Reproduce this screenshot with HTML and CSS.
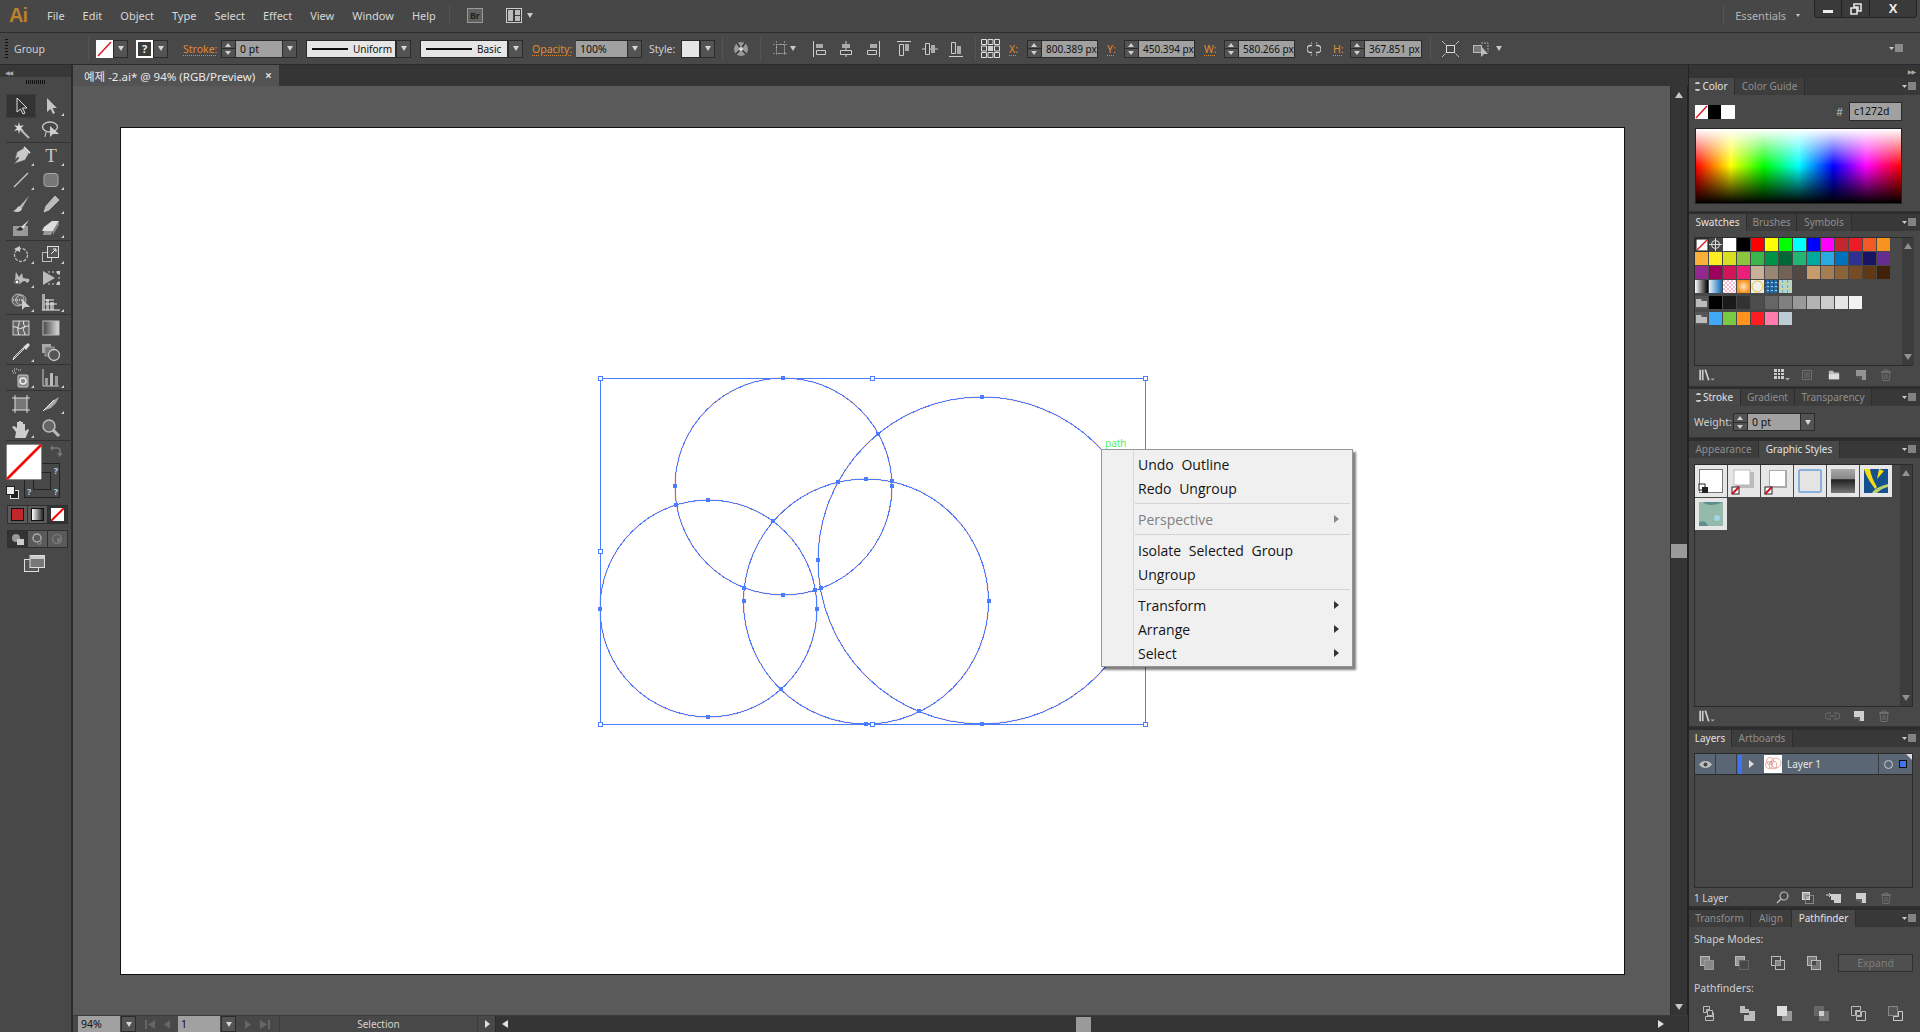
FILE: index.html
```html
<!DOCTYPE html>
<html lang="en">
<head>
    <meta charset="UTF-8">
    <title>Adobe Illustrator</title>
    <link rel="stylesheet" href="styles.css">
</head>
<body>
    <!-- icon set -->
    <svg class="defs" width="0" height="0">
        <symbol id="sel" viewBox="0 0 20 20"><path d="M6 2v14l3.5-3 2.5 5 2-1-2.5-5H16z" fill="#333" stroke="#ddd"/></symbol>
        <symbol id="direct" viewBox="0 0 20 20"><path d="M6 2v14l3.5-3 2.5 5 2-1-2.5-5H16z" fill="#c4c4c4"/></symbol>
        <symbol id="wand" viewBox="0 0 20 20"><path d="M8 2l1 4 4-1-3 3 3 3-4-1-1 4-1-4-4 1 3-3-3-3 4 1z" fill="#ddd"/><path d="M10 10l8 8" stroke="#bbb" stroke-width="2"/></symbol>
        <symbol id="lasso" viewBox="0 0 20 20"><ellipse cx="9" cy="7" rx="7.5" ry="5" fill="none" stroke="#ccc" stroke-width="1.3"/><path d="M5 12l-1 5" stroke="#ccc"/><path d="M9 6v11l3-3 6 0z" fill="#ccc"/></symbol>
        <symbol id="pen" viewBox="0 0 20 20"><path d="M13 2l5 5-4 7-9 3-2 1 5-6-1-1-3 3 2-8z" fill="#c8c8c8" stroke="#555" stroke-width=".5"/><path d="M13 1l6 6" stroke="#eee" stroke-width="1.5"/></symbol>
        <symbol id="line" viewBox="0 0 20 20"><path d="M3 17L17 3" stroke="#ccc" stroke-width="1.2"/></symbol>
        <symbol id="rrect" viewBox="0 0 20 20"><rect x="3" y="3.5" width="14" height="13" rx="3" fill="#777" stroke="#aaa"/></symbol>
        <symbol id="brush" viewBox="0 0 20 20"><path d="M18 2L9 12l2 2z" fill="#bbb"/><path d="M9 12c-3 0-3 4-7 5 4 2 9 1 9-3z" fill="#ccc"/></symbol>
        <symbol id="pencil" viewBox="0 0 20 20"><path d="M14 2l4 4-10 10-5 2 2-6z" fill="#bbb" stroke="#ddd" stroke-width=".6"/></symbol>
        <symbol id="blob" viewBox="0 0 20 20"><rect x="2" y="8" width="15" height="10" fill="#999"/><path d="M18 2l-8 7 2 2z" fill="#ddd"/><path d="M10 9c-2 0-3 2-5 3 3 1 7 1 7-1z" fill="#333"/></symbol>
        <symbol id="eraser" viewBox="0 0 20 20"><path d="M11 3h7l-6 10-9 0-2 0 2-4z" fill="#ddd"/><path d="M3 13h9l-2 4H2z" fill="#999"/><path d="M12 13l6-10v4l-6 10z" fill="#888"/></symbol>
        <symbol id="rotate" viewBox="0 0 20 20"><circle cx="10" cy="11" r="6.5" fill="none" stroke="#bbb" stroke-width="1.3" stroke-dasharray="3 1.5"/><path d="M3 5l6-3v6z" fill="#ccc"/></symbol>
        <symbol id="scale" viewBox="0 0 20 20"><rect x="1.5" y="8.5" width="9" height="9" fill="none" stroke="#bbb"/><rect x="6.5" y="2.5" width="11" height="11" fill="#555" stroke="#ddd"/><path d="M10 10l5-5M12 5h3v3" fill="none" stroke="#eee"/></symbol>
        <symbol id="warp" viewBox="0 0 20 20"><path d="M3 15c2-4 1-8 2-11l3 5 3-4 1 5 6 1c1 3-1 3-2 4-1-2-3-3-5-1-2 3-5 2-6 2z" fill="#bbb"/><circle cx="6" cy="14" r="2" fill="#fff" stroke="#444"/></symbol>
        <symbol id="free" viewBox="0 0 20 20"><path d="M2 3l12 7-12 7z" fill="#bbb"/><path d="M7 4h11v12H7" fill="none" stroke="#ccc" stroke-dasharray="2 2"/><rect x="16" y="3" width="3" height="3" fill="#ccc"/><rect x="16" y="14" width="3" height="3" fill="#ccc"/></symbol>
        <symbol id="builder" viewBox="0 0 20 20"><circle cx="7" cy="8" r="6" fill="#666" stroke="#bbb"/><circle cx="10" cy="8" r="5" fill="none" stroke="#bbb"/><path d="M2 8h9" stroke="#fff" stroke-dasharray="1 1"/><path d="M11 7v11l3-3h5z" fill="#ccc"/></symbol>
        <symbol id="graph2" viewBox="0 0 20 20"><path d="M1 2h3v16H1zM5 7h3v11H5zM9 10h4v8H9z" fill="#aaa"/><path d="M1 18h18M4 8h9M4 12h12" stroke="#eee"/></symbol>
        <symbol id="mesh" viewBox="0 0 20 20"><rect x="2" y="3" width="16" height="14" fill="#666" stroke="#ccc"/><path d="M2 9c5-1 5 3 9 1s4-2 7-2M8 3c1 4-3 6 0 14M13 3c-2 3 2 5 0 7s1 4 1 7" fill="none" stroke="#eee"/></symbol>
        <symbol id="grad" viewBox="0 0 20 20"><defs><linearGradient id="gr1"><stop offset="0" stop-color="#444"/><stop offset="1" stop-color="#ddd"/></linearGradient></defs><rect x="2" y="3" width="16" height="14" fill="url(#gr1)" stroke="#bbb"/></symbol>
        <symbol id="dropper" viewBox="0 0 20 20"><path d="M13 7l-9 9-2 2 1-3 9-9z" fill="#666" stroke="#ddd"/><path d="M12 5l5-4 2 2-4 5z" fill="#ddd"/></symbol>
        <symbol id="blend" viewBox="0 0 20 20"><rect x="1" y="2" width="9" height="9" fill="#aaa"/><rect x="4" y="5" width="9" height="9" fill="#777" stroke="#999"/><circle cx="13" cy="13" r="5.5" fill="#555" stroke="#ccc" stroke-width="1.3"/></symbol>
        <symbol id="spray" viewBox="0 0 20 20"><rect x="7" y="7" width="10" height="12" rx="1" fill="#888" stroke="#ccc"/><circle cx="12" cy="13" r="3" fill="none" stroke="#eee" stroke-width="1.5"/><path d="M1 3h4M2 5h3M3 1h3M7 2h3" stroke="#ddd" stroke-dasharray="1 1"/></symbol>
        <symbol id="bars" viewBox="0 0 20 20"><path d="M2 1v17h16" fill="none" stroke="#ccc"/><rect x="4" y="10" width="3" height="8" fill="#999"/><rect x="9" y="5" width="3" height="13" fill="#bbb"/><rect x="14" y="8" width="3" height="10" fill="#999"/></symbol>
        <symbol id="artboard" viewBox="0 0 20 20"><rect x="4" y="4" width="12" height="12" fill="#777"/><path d="M4 1v18M16 1v18M1 4h18M1 16h18" stroke="#ddd"/></symbol>
        <symbol id="slice" viewBox="0 0 20 20"><path d="M2 17L13 6l5-3-3 6-5 5z" fill="#aaa"/><path d="M2 17l11-11" stroke="#eee"/></symbol>
        <symbol id="hand" viewBox="0 0 20 20"><path d="M5 14L1 9l2-1 3 2V4h2v5-6h2v6-5h2v5-3h2v7l3-2 1 1-3 7c-1 2-3 3-5 3s-5-1-6-2z" fill="#ccc"/></symbol>
        <symbol id="zoom" viewBox="0 0 20 20"><circle cx="8" cy="8" r="6" fill="#666" stroke="#bbb" stroke-width="1.5"/><path d="M12 12l6 6" stroke="#bbb" stroke-width="3"/></symbol>
        <symbol id="lib" viewBox="0 0 20 14"><path d="M1 1h2v12H1zM4 1h2v12H4z" fill="#ccc"/><path d="M7 1l2-.5 4 12.5-2 .5z" fill="#ccc"/><path d="M14 11h5l-2.5 2.5z" fill="#aaa"/></symbol>
        <symbol id="trash" viewBox="0 0 12 12"><path d="M1 2.5h10M4 2.5V1h4v1.5M2 3.5l1 8h6l1-8zM5 5v5M7 5v5" fill="none" stroke="#6e6e6e"/></symbol>
        <symbol id="newitem" viewBox="0 0 12 12"><path d="M1 1h10v10H7V7H1z" fill="#cfcfcf"/><path d="M1 8h5v3.5" fill="none" stroke="#777"/></symbol>
        <symbol id="flyout" viewBox="0 0 14 9"><path d="M0 3h5L2.5 6z" fill="#ccc"/><path d="M6 1h8M6 3h8M6 5h8M6 7h8" stroke="#ccc"/></symbol>
        <symbol id="folder" viewBox="0 0 14 12"><path d="M1 1h5l1 2h6v8H1z" fill="#bbb"/><path d="M1 5h12v6H1z" fill="#ddd"/></symbol>
    </svg>

    <div class="menubar">
        <span class="app-logo">Ai</span>
        <nav class="menu-items">
            <span>File</span><span>Edit</span><span>Object</span><span>Type</span><span>Select</span><span>Effect</span><span>View</span><span>Window</span><span>Help</span>
        </nav>
        <span class="vsep tall ml-13"></span>
        <span class="bridge ml-17">Br</span>
        <svg class="ml-23" width="16" height="15" viewBox="0 0 16 15"><rect x=".5" y=".5" width="15" height="14" fill="#3c3c3c" stroke="#ccc"/><path d="M2 2h5v11H2zM9 2h5v5H9zM9 8h5v5H9z" fill="#bbb"/></svg>
        <span class="caret light ml-5"></span>
        <span class="vsep tall workspace-sep"></span>
        <span class="workspace">Essentials</span>
        <span class="caret small ml-10"></span>
        <div class="win-btns">
            <span class="win-btn min"><i></i></span>
            <span class="win-btn restore"><svg width="12" height="12" viewBox="0 0 12 12"><path d="M4 1h7v7H8V4H4zM1 5h6v6H1z" fill="none" stroke="#e6e6e6" stroke-width="1.6"/></svg></span>
            <span class="win-btn close">X</span>
        </div>
    </div>

    <div class="controlbar">
        <span class="grip"></span>
        <span class="ctl-label w-74 ml-6">Group</span>
        <span class="vsep"></span>
        <svg class="ml-7" width="17" height="18" viewBox="0 0 17 18"><rect width="17" height="18" fill="#fff"/><path d="M2 16L15 2" stroke="#e01b24" stroke-width="1.5"/></svg>
        <span class="drop"></span>
        <span class="unknown ml-8">?</span>
        <span class="drop"></span>
        <span class="orange-label w-30 ml-15">Stroke:</span>
        <span class="spin ml-8"><b></b><b></b></span>
        <span class="field w-46">0 pt</span>
        <span class="drop"></span>
        <span class="profile w-90 ml-9"><i class="w-36"></i>Uniform</span>
        <span class="drop"></span>
        <span class="profile w-88 ml-9"><i class="w-46"></i>Basic</span>
        <span class="drop"></span>
        <span class="orange-label w-37 ml-9">Opacity:</span>
        <span class="field w-51 ml-7">100%</span>
        <span class="drop"></span>
        <span class="ctl-label w-32 ml-7">Style:</span>
        <span class="style-swatch"></span>
        <span class="drop"></span>
        <span class="vsep ml-7"></span>
        <svg class="ml-11" width="14" height="14" viewBox="0 0 14 14"><circle cx="7" cy="7" r="7" fill="#999"/><path d="M7 7L3 1M7 7l4-6M7 7l-5 5M7 7l5 5" stroke="#333" stroke-width="1.5"/><circle cx="7" cy="7" r="2" fill="#ddd"/></svg>
        <span class="vsep ml-12"></span>
        <svg class="ml-12" width="15" height="16" viewBox="0 0 15 16"><rect x="3.5" y="3.5" width="8" height="9" fill="none" stroke="#bbb" stroke-dasharray="2 1"/><path d="M3.5 0v16M11.5 0v16M0 3.5h15M0 12.5h15" stroke="#888" stroke-dasharray="2 2"/></svg>
        <span class="caret ml-2"></span>
        <svg class="ml-17" width="14" height="16" viewBox="0 0 14 16"><path d="M.5 0v16" stroke="#ccc"/><path d="M3 3h7v4H3z" fill="#aaa"/><path d="M3.5 9.5h9v4h-9z" fill="none" stroke="#ccc"/></svg>
        <svg class="ml-13" width="12" height="16" viewBox="0 0 12 16"><path d="M6 0v16" stroke="#ccc"/><path d="M2 3h8v4H2z" fill="#aaa"/><path d="M.5 9.5h11v4H.5z" fill="#444" stroke="#ccc"/></svg>
        <svg class="ml-14" width="14" height="16" viewBox="0 0 14 16"><path d="M13.5 0v16" stroke="#ccc"/><path d="M4 3h7v4H4z" fill="#aaa"/><path d="M1.5 9.5h9v4h-9z" fill="none" stroke="#ccc"/></svg>
        <svg class="ml-17" width="14" height="16" viewBox="0 0 14 16"><path d="M0 .5h14" stroke="#ccc"/><path d="M2.5 3.5h4v11h-4z" fill="none" stroke="#ccc"/><path d="M8 3h4v7H8z" fill="#aaa"/></svg>
        <svg class="ml-11" width="16" height="16" viewBox="0 0 16 16"><path d="M0 8h16" stroke="#ccc"/><path d="M3.5 2.5h4v11h-4z" fill="#444" stroke="#ccc"/><path d="M9 4h4v8H9z" fill="#aaa"/></svg>
        <svg class="ml-11" width="14" height="16" viewBox="0 0 14 16"><path d="M0 15.5h14" stroke="#ccc"/><path d="M2.5 1.5h4v11h-4z" fill="none" stroke="#ccc"/><path d="M8 5h4v8H8z" fill="#aaa"/></svg>
        <span class="vsep ml-12"></span>
        <svg class="ml-5" width="19" height="19" viewBox="0 0 19 19"><path d="M.5.5h5v5h-5zM7 .5h5v5H7zM13.5.5h5v5h-5zM.5 7h5v5h-5zM13.5 7h5v5h-5zM.5 13.5h5v5h-5zM7 13.5h5v5H7zM13.5 13.5h5v5h-5z" fill="none" stroke="#ddd"/><rect x="7" y="7" width="5" height="5" fill="#ccc"/></svg>
        <span class="orange-label w-11 ml-9">X:</span>
        <span class="spin ml-7"><b></b><b></b></span>
        <span class="field dark w-56">800.389 px</span>
        <span class="orange-label w-9 ml-9">Y:</span>
        <span class="spin ml-8"><b></b><b></b></span>
        <span class="field dark w-56">450.394 px</span>
        <span class="orange-label w-13 ml-9">W:</span>
        <span class="spin ml-7"><b></b><b></b></span>
        <span class="field dark w-56">580.266 px</span>
        <svg class="ml-12" width="14" height="16" viewBox="0 0 14 16"><path d="M5 4.5H3.500a3.500 3.500 0 0 0 0 7H5M9 4.5h1.500a3.500 3.500 0 0 1 0 7H9" fill="none" stroke="#ccc" stroke-width="1.3"/><path d="M4 1l1 2M10 1L9 3M4 15l1-2M10 15l-1-2" stroke="#999"/></svg>
        <span class="orange-label w-11 ml-12">H:</span>
        <span class="spin ml-6"><b></b><b></b></span>
        <span class="field dark w-57">367.851 px</span>
        <span class="vsep ml-8"></span>
        <svg class="ml-11" width="17" height="16" viewBox="0 0 17 16"><rect x="4.5" y="4.5" width="8" height="7" fill="none" stroke="#ddd"/><path d="M0 0l3.5 3.5M17 0l-3.5 3.5M0 16l3.5-3.5M17 16l-3.5-3.5" stroke="#bbb"/></svg>
        <svg class="ml-14" width="16" height="16" viewBox="0 0 16 16"><rect x=".5" y="4.5" width="8" height="7" fill="#777" stroke="#bbb"/><path d="M8 2h7v9" fill="none" stroke="#aaa" stroke-dasharray="2 1"/><path d="M8 5v11l3-3h4z" fill="#bbb"/></svg>
        <span class="caret ml-7"></span>
        <svg class="ctl-flyout" width="14" height="9"><use href="#flyout"/></svg>
    </div>

    <div class="workarea">
        <aside class="tools">
            <div class="tools-head"><span class="collapse">&#9664;&#9664;</span></div>
            <div class="tools-grip"></div>
            <div class="tool-group">
                <span class="tool active"><svg><use href="#sel"/></svg></span>
                <span class="tool more"><svg><use href="#direct"/></svg></span>
                <span class="tool"><svg><use href="#wand"/></svg></span>
                <span class="tool"><svg><use href="#lasso"/></svg></span>
            </div>
            <div class="tool-group">
                <span class="tool more"><svg><use href="#pen"/></svg></span>
                <span class="tool more type-tool">T</span>
                <span class="tool more"><svg><use href="#line"/></svg></span>
                <span class="tool more"><svg><use href="#rrect"/></svg></span>
                <span class="tool"><svg><use href="#brush"/></svg></span>
                <span class="tool more"><svg><use href="#pencil"/></svg></span>
                <span class="tool"><svg><use href="#blob"/></svg></span>
                <span class="tool more"><svg><use href="#eraser"/></svg></span>
            </div>
            <div class="tool-group">
                <span class="tool more"><svg><use href="#rotate"/></svg></span>
                <span class="tool more"><svg><use href="#scale"/></svg></span>
                <span class="tool more"><svg><use href="#warp"/></svg></span>
                <span class="tool"><svg><use href="#free"/></svg></span>
                <span class="tool more"><svg><use href="#builder"/></svg></span>
                <span class="tool more"><svg><use href="#graph2"/></svg></span>
            </div>
            <div class="tool-group">
                <span class="tool"><svg><use href="#mesh"/></svg></span>
                <span class="tool"><svg><use href="#grad"/></svg></span>
                <span class="tool more"><svg><use href="#dropper"/></svg></span>
                <span class="tool"><svg><use href="#blend"/></svg></span>
            </div>
            <div class="tool-group">
                <span class="tool more"><svg><use href="#spray"/></svg></span>
                <span class="tool more"><svg><use href="#bars"/></svg></span>
            </div>
            <div class="tool-group">
                <span class="tool"><svg><use href="#artboard"/></svg></span>
                <span class="tool more"><svg><use href="#slice"/></svg></span>
                <span class="tool more"><svg><use href="#hand"/></svg></span>
                <span class="tool"><svg><use href="#zoom"/></svg></span>
            </div>
            <div class="fill-stroke">
                <div class="stroke-box"><span class="stroke-inner"></span><em class="q q1">?</em><em class="q q2">?</em><em class="q q3">?</em></div>
                <div class="fill-box"><svg width="36" height="36" viewBox="0 0 36 36"><rect width="36" height="36" fill="#fff" stroke="#111"/><path d="M1 35L35 1" stroke="#f00" stroke-width="2.5"/></svg></div>
                <svg class="swap" width="12" height="12" viewBox="0 0 12 12"><path d="M1 3h7c2 0 2 2 2 6" fill="none" stroke="#777" stroke-width="1.5"/><path d="M3 0v6L0 3zM7 8h6l-3 4z" fill="#777"/></svg>
                <svg class="default-colors" width="13" height="13" viewBox="0 0 13 13"><rect x="4.5" y="4.5" width="8" height="8" fill="#222" stroke="#ddd"/><rect x=".5" y=".5" width="8" height="8" fill="#eee" stroke="#222"/></svg>
            </div>
            <div class="mode-row colors">
                <span class="mode"><i class="mode-red"></i></span>
                <span class="mode"><i class="mode-grad"></i></span>
                <span class="mode on"><svg width="13" height="13" viewBox="0 0 13 13"><rect width="13" height="13" fill="#fff"/><path d="M0 13L13 0" stroke="#f00" stroke-width="2"/></svg></span>
            </div>
            <div class="mode-row draw">
                <span class="mode on"><svg width="14" height="12" viewBox="0 0 14 12"><circle cx="5" cy="5" r="4" fill="#999"/><rect x="6" y="6" width="7" height="6" fill="#ccc"/></svg></span>
                <span class="mode"><svg width="14" height="12" viewBox="0 0 14 12"><circle cx="6" cy="5" r="4" fill="none" stroke="#aaa" stroke-width="1.5"/><path d="M10 8v3H6" fill="none" stroke="#888"/></svg></span>
                <span class="mode"><svg width="14" height="12" viewBox="0 0 14 12"><circle cx="6" cy="6" r="4.5" fill="none" stroke="#777" stroke-width="1.5"/><rect x="6" y="5" width="4" height="4" fill="#777"/></svg></span>
            </div>
            <svg class="screen-mode" width="21" height="17" viewBox="0 0 21 17"><rect x=".5" y="4.5" width="14" height="12" fill="#555" stroke="#ddd"/><rect x="6" y=".5" width="14.5" height="12" fill="#777" stroke="#ddd"/><rect x="6.5" y="1" width="14" height="3" fill="#ccc"/></svg>
        </aside>

        <main class="doc">
            <div class="tabbar">
                <div class="doc-tab"><span class="doc-name">예제 -2.ai* @ 94% (RGB/Preview)</span><span class="tab-x">&times;</span></div>
            </div>
            <div class="midrow">
                <div class="canvas">
                    <div class="artboard">
                        <svg class="drawing" viewBox="120 127 1505 848">
                            <g class="under">
                                <circle cx="783.5" cy="486.5" r="108.5"/>
                                <circle cx="708.5" cy="608.5" r="108.5"/>
                                <circle cx="866" cy="601.5" r="122.5"/>
                                <circle cx="981.5" cy="560.5" r="163.5"/>
                            </g>
                            <g class="paths">
                                <path class="box" d="M600.5 378.5H1145.5V724.5H600.5Z"/>
                                <circle cx="783.5" cy="486.5" r="108.5"/>
                                <circle cx="708.5" cy="608.5" r="108.5"/>
                                <circle cx="866" cy="601.5" r="122.5"/>
                                <circle cx="981.5" cy="560.5" r="163.5"/>
                            </g>
                            <g class="anchors">
                                <rect x="781" y="376" width="4" height="4"/><rect x="876" y="432" width="4" height="4"/><rect x="836" y="480" width="4" height="4"/>
                                <rect x="890" y="479" width="4" height="4"/><rect x="890" y="484" width="4" height="4"/><rect x="673" y="484" width="4" height="4"/>
                                <rect x="674" y="503" width="4" height="4"/><rect x="706" y="498" width="4" height="4"/><rect x="771" y="519" width="4" height="4"/>
                                <rect x="742" y="586" width="4" height="4"/><rect x="742" y="599" width="4" height="4"/><rect x="781" y="593" width="4" height="4"/>
                                <rect x="813" y="588" width="4" height="4"/><rect x="819" y="586" width="4" height="4"/><rect x="816" y="558" width="4" height="4"/>
                                <rect x="815" y="607" width="4" height="4"/><rect x="598" y="607" width="4" height="4"/><rect x="706" y="715" width="4" height="4"/>
                                <rect x="779" y="687" width="4" height="4"/><rect x="864" y="722" width="4" height="4"/><rect x="917" y="709" width="4" height="4"/>
                                <rect x="980" y="722" width="4" height="4"/><rect x="987" y="599" width="4" height="4"/><rect x="864" y="477" width="4" height="4"/>
                                <rect x="980" y="395" width="4" height="4"/>
                            </g>
                            <g class="handles">
                                <rect x="598.5" y="376.5" width="4" height="4"/><rect x="870.5" y="376.5" width="4" height="4"/><rect x="1143.5" y="376.5" width="4" height="4"/>
                                <rect x="598.5" y="549.5" width="4" height="4"/><rect x="1143.5" y="549.5" width="4" height="4"/>
                                <rect x="598.5" y="722.5" width="4" height="4"/><rect x="870.5" y="722.5" width="4" height="4"/><rect x="1143.5" y="722.5" width="4" height="4"/>
                            </g>
                            <text class="smart-label" x="1105" y="447">path</text>
                        </svg>
                    </div>
                    <div class="context-menu">
                        <div class="cm-item">Undo Outline</div>
                        <div class="cm-item">Redo Ungroup</div>
                        <div class="cm-sep"></div>
                        <div class="cm-item disabled has-sub">Perspective</div>
                        <div class="cm-sep"></div>
                        <div class="cm-item">Isolate Selected Group</div>
                        <div class="cm-item">Ungroup</div>
                        <div class="cm-sep"></div>
                        <div class="cm-item has-sub">Transform</div>
                        <div class="cm-item has-sub">Arrange</div>
                        <div class="cm-item has-sub">Select</div>
                    </div>
                </div>
                <div class="vscroll">
                    <span class="arrow up"></span>
                    <span class="thumb"></span>
                    <span class="arrow down"></span>
                </div>
            </div>
            <div class="statusbar">
                <span class="field status-field ml-5">94%</span>
                <span class="drop status-drop"></span>
                <span class="nav-group w-42"><svg width="10" height="9" viewBox="0 0 10 9"><path d="M0 0h2v9H0zM10 0v9L3 4.5z" fill="#666"/></svg><svg width="6" height="9" viewBox="0 0 6 9"><path d="M6 0v9L0 4.5z" fill="#666"/></svg></span>
                <span class="field status-field">1</span>
                <span class="drop status-drop"></span>
                <span class="nav-group w-42"><svg width="6" height="9" viewBox="0 0 6 9"><path d="M0 0v9l6-4.5z" fill="#666"/></svg><svg width="10" height="9" viewBox="0 0 10 9"><path d="M0 0v9l7-4.5zM8 0h2v9H8z" fill="#666"/></svg></span>
                <span class="status-text">Selection</span>
                <span class="status-more"></span>
                <div class="hscroll">
                    <span class="arrow left"></span>
                    <span class="thumb"></span>
                    <span class="arrow right"></span>
                </div>
            </div>
        </main>

        <aside class="dock">
            <div class="dock-head"><span class="collapse">&#9654;&#9654;</span></div>

            <section class="panel color-panel">
                <div class="tabs"><span class="tab on w-46"><i class="updown"></i>Color</span><span class="tab w-70">Color Guide</span><svg class="flyout" width="14" height="9"><use href="#flyout"/></svg></div>
                <div class="color-top">
                    <svg width="40" height="14" viewBox="0 0 40 14"><rect width="13" height="14" fill="#fff"/><path d="M1 13L12 1" stroke="#e01b24" stroke-width="1.5"/><rect x="13" width="13" height="14" fill="#000"/><rect x="26" width="14" height="14" fill="#fff"/></svg>
                    <span class="hash">#</span>
                    <span class="hex-field">c1272d</span>
                </div>
                <div class="spectrum"></div>
            </section>

            <section class="panel swatches-panel">
                <div class="tabs"><span class="tab on w-58">Swatches</span><span class="tab w-50">Brushes</span><span class="tab w-55">Symbols</span><svg class="flyout" width="14" height="9"><use href="#flyout"/></svg></div>
                <div class="list swatch-list">
                    <svg class="swatch-grid" width="207" height="92" viewBox="0 0 207 92">
                        <defs>
                            <linearGradient id="sw-bw"><stop offset="0" stop-color="#fff"/><stop offset="1" stop-color="#000"/></linearGradient>
                            <linearGradient id="sw-blue"><stop offset="0" stop-color="#e8f2fa"/><stop offset="1" stop-color="#0a6ab5"/></linearGradient>
                            <radialGradient id="sw-or"><stop offset="0" stop-color="#ffe4c0"/><stop offset="1" stop-color="#f7931e"/></radialGradient>
                            <pattern id="sw-ck" width="4" height="4" patternUnits="userSpaceOnUse"><rect width="4" height="4" fill="#f6b7d0"/><rect width="2" height="2" fill="#fff"/><rect x="2" y="2" width="2" height="2" fill="#fff"/></pattern>
                            <pattern id="sw-tx" width="4" height="4" patternUnits="userSpaceOnUse"><rect width="4" height="4" fill="#2a6aa5"/><rect width="2" height="1" fill="#9cc3e0"/><rect x="2" y="2" width="1" height="2" fill="#14426f"/></pattern>
                            <pattern id="sw-mp" width="5" height="5" patternUnits="userSpaceOnUse"><rect width="5" height="5" fill="#b4d5c7"/><rect width="3" height="1" fill="#e5d67c"/><rect x="2" y="2" width="1" height="3" fill="#6ea7c9"/></pattern>
                        </defs>
                        <rect x="1" y="1" width="12" height="12" fill="#fff" stroke="#111"/><path d="M2 12L12 2" stroke="#e01b24" stroke-width="1.5"/>
                        <rect x="14" width="13" height="13" fill="#444"/><circle cx="20.5" cy="6.5" r="4" fill="none" stroke="#ddd"/><path d="M20.5 0v13M14 6.5h13" stroke="#ddd"/>
                        <rect x="28" width="13" height="13" fill="#fff"/><rect x="42" width="13" height="13" fill="#000"/><rect x="56" width="13" height="13" fill="#f00"/><rect x="70" width="13" height="13" fill="#ff0"/><rect x="84" width="13" height="13" fill="#0f0"/><rect x="98" width="13" height="13" fill="#0ff"/><rect x="112" width="13" height="13" fill="#00f"/><rect x="126" width="13" height="13" fill="#f0f"/><rect x="140" width="13" height="13" fill="#c1272d"/><rect x="154" width="13" height="13" fill="#ed1c24"/><rect x="168" width="13" height="13" fill="#f15a24"/><rect x="182" width="13" height="13" fill="#f7931e"/>
                        <rect y="14" width="13" height="13" fill="#fbb03b"/><rect x="14" y="14" width="13" height="13" fill="#fcee21"/><rect x="28" y="14" width="13" height="13" fill="#d9e021"/><rect x="42" y="14" width="13" height="13" fill="#8cc63f"/><rect x="56" y="14" width="13" height="13" fill="#39b54a"/><rect x="70" y="14" width="13" height="13" fill="#009245"/><rect x="84" y="14" width="13" height="13" fill="#006837"/><rect x="98" y="14" width="13" height="13" fill="#22b573"/><rect x="112" y="14" width="13" height="13" fill="#00a99d"/><rect x="126" y="14" width="13" height="13" fill="#29abe2"/><rect x="140" y="14" width="13" height="13" fill="#0071bc"/><rect x="154" y="14" width="13" height="13" fill="#2e3192"/><rect x="168" y="14" width="13" height="13" fill="#1b1464"/><rect x="182" y="14" width="13" height="13" fill="#662d91"/>
                        <rect y="28" width="13" height="13" fill="#93278f"/><rect x="14" y="28" width="13" height="13" fill="#9e005d"/><rect x="28" y="28" width="13" height="13" fill="#d4145a"/><rect x="42" y="28" width="13" height="13" fill="#ed1e79"/><rect x="56" y="28" width="13" height="13" fill="#c7b299"/><rect x="70" y="28" width="13" height="13" fill="#998675"/><rect x="84" y="28" width="13" height="13" fill="#736357"/><rect x="98" y="28" width="13" height="13" fill="#534741"/><rect x="112" y="28" width="13" height="13" fill="#c69c6d"/><rect x="126" y="28" width="13" height="13" fill="#a67c52"/><rect x="140" y="28" width="13" height="13" fill="#8c6239"/><rect x="154" y="28" width="13" height="13" fill="#754c24"/><rect x="168" y="28" width="13" height="13" fill="#603813"/><rect x="182" y="28" width="13" height="13" fill="#42210b"/>
                        <rect y="42" width="13" height="13" fill="url(#sw-bw)"/><rect x="14" y="42" width="13" height="13" fill="url(#sw-blue)"/><rect x="28" y="42" width="13" height="13" fill="url(#sw-ck)"/><rect x="42" y="42" width="13" height="13" fill="url(#sw-or)"/><rect x="56" y="42" width="13" height="13" fill="#eee"/><circle cx="62.5" cy="48.5" r="5.5" fill="none" stroke="#e2c020"/><rect x="70" y="42" width="13" height="13" fill="url(#sw-tx)"/><rect x="84" y="42" width="13" height="13" fill="url(#sw-mp)"/>
                        <rect y="58" width="13" height="13" fill="#555"/><path d="M1 61h5l1 2h5v6H1z" fill="#bbb"/><rect x="14" y="58" width="13" height="13" fill="#000"/><rect x="28" y="58" width="13" height="13" fill="#1a1a1a"/><rect x="42" y="58" width="13" height="13" fill="#333"/><rect x="56" y="58" width="13" height="13" fill="#4d4d4d"/><rect x="70" y="58" width="13" height="13" fill="#666"/><rect x="84" y="58" width="13" height="13" fill="#808080"/><rect x="98" y="58" width="13" height="13" fill="#999"/><rect x="112" y="58" width="13" height="13" fill="#b3b3b3"/><rect x="126" y="58" width="13" height="13" fill="#ccc"/><rect x="140" y="58" width="13" height="13" fill="#e6e6e6"/><rect x="154" y="58" width="13" height="13" fill="#f2f2f2"/>
                        <rect y="74" width="13" height="13" fill="#555"/><path d="M1 77h5l1 2h5v6H1z" fill="#bbb"/><rect x="14" y="74" width="13" height="13" fill="#3fa9f5"/><rect x="28" y="74" width="13" height="13" fill="#7ac943"/><rect x="42" y="74" width="13" height="13" fill="#ff931e"/><rect x="56" y="74" width="13" height="13" fill="#ff1d25"/><rect x="70" y="74" width="13" height="13" fill="#ff7bac"/><rect x="84" y="74" width="13" height="13" fill="#bdccd4"/>
                    </svg>
                    <div class="list-scroll"><span class="arrow up"></span><span class="arrow down"></span></div>
                </div>
                <div class="panel-foot">
                    <svg class="foot-lib" width="18" height="12"><use href="#lib"/></svg>
                    <svg class="ml-58" width="16" height="12" viewBox="0 0 16 12"><path d="M0 0h10v10H0z" fill="#ccc"/><path d="M3.5 0v10M6.5 0v10M0 3.5h10M0 6.5h10" stroke="#444"/><path d="M11 9h5l-2.5 2.5z" fill="#aaa"/></svg>
                    <svg class="ml-12" width="10" height="12" viewBox="0 0 10 12"><path d="M.5 1.5h9v9h-9zM2 4h6M2 6h6M2 8h6" fill="none" stroke="#6e6e6e"/></svg>
                    <svg class="ml-16" width="12" height="12"><use href="#folder"/></svg>
                    <svg class="ml-15 dim" width="12" height="12"><use href="#newitem"/></svg>
                    <svg class="ml-13" width="12" height="12"><use href="#trash"/></svg>
                </div>
            </section>

            <section class="panel stroke-panel">
                <div class="tabs"><span class="tab on w-52"><i class="updown"></i>Stroke</span><span class="tab w-54">Gradient</span><span class="tab w-77">Transparency</span><svg class="flyout" width="14" height="9"><use href="#flyout"/></svg></div>
                <div class="weight-row">
                    <span class="weight-label">Weight:</span>
                    <span class="spin"><b></b><b></b></span>
                    <span class="field w-52">0 pt</span>
                    <span class="drop"></span>
                </div>
            </section>

            <section class="panel styles-panel">
                <div class="tabs"><span class="tab w-70">Appearance</span><span class="tab on w-81">Graphic Styles</span><svg class="flyout" width="14" height="9"><use href="#flyout"/></svg></div>
                <div class="list styles-list">
                    <svg class="style-grid" width="199" height="66" viewBox="0 0 199 66">
                        <defs>
                            <linearGradient id="st-gr" x2="0" y2="1"><stop offset="0" stop-color="#aaa"/><stop offset=".4" stop-color="#888"/><stop offset=".45" stop-color="#222"/><stop offset="1" stop-color="#777"/></linearGradient>
                        </defs>
                        <rect width="32" height="32" fill="#e6e6e6"/><rect x="4.5" y="4.5" width="23" height="23" fill="#fff" stroke="#777"/><rect x="4" y="19" width="6" height="6" fill="#fff" stroke="#222"/><rect x="7" y="22" width="6" height="6" fill="#222"/>
                        <rect x="33" width="32" height="32" fill="#e6e6e6"/><rect x="41" y="7" width="18" height="16" fill="#bbb"/><rect x="39" y="5" width="16" height="15" fill="#fff" stroke="#bbb"/><rect x="37" y="22" width="7" height="7" fill="#fff" stroke="#222"/><path d="M37 29l7-7" stroke="#d01020" stroke-width="2"/>
                        <rect x="66" width="32" height="32" fill="#e6e6e6"/><rect x="74" y="5" width="18" height="18" fill="#aaa"/><rect x="75" y="6" width="15" height="15" fill="#fff"/><rect x="70" y="22" width="7" height="7" fill="#fff" stroke="#222"/><path d="M70 29l7-7" stroke="#d01020" stroke-width="2"/>
                        <rect x="99" width="32" height="32" fill="#e6e6e6"/><rect x="104" y="5" width="22" height="22" rx="1" fill="#e4e4e4" stroke="#69a0db" stroke-width="1.5"/>
                        <rect x="132" width="32" height="32" fill="#e6e6e6"/><rect x="136" y="4" width="24" height="24" fill="url(#st-gr)"/>
                        <rect x="165" width="32" height="32" fill="#e6e6e6"/><rect x="169" y="4" width="24" height="24" fill="#15508f"/><path d="M169 4c3 9 7 14 11 20l2-2c-3-5-6-11-7-18zM184 4l-2 10 7-8z" fill="#f6dc10"/><path d="M177 28c3-5 9-7 16-9v3c-5 1-8 3-11 6z" fill="#bcd070"/>
                        <rect y="33" width="32" height="32" fill="#e6e6e6"/><rect x="4" y="37" width="24" height="24" fill="#96baa9"/><path d="M8 37c3 4 12 4 20 0zM4 57c4-2 8 0 9 4H4z" fill="#5d908c"/><circle cx="22" cy="53" r="3" fill="#a3d4ea"/>
                    </svg>
                    <div class="list-scroll"><span class="arrow up"></span><span class="arrow down"></span></div>
                </div>
                <div class="panel-foot">
                    <svg class="foot-lib" width="18" height="12"><use href="#lib"/></svg>
                    <svg class="ml-109" width="15" height="12" viewBox="0 0 15 12"><path d="M6 3H3a3 3 0 0 0 0 6h3M9 3h3a3 3 0 0 1 0 6H9M4 6h7" fill="none" stroke="#6e6e6e"/></svg>
                    <svg class="ml-13" width="12" height="12"><use href="#newitem"/></svg>
                    <svg class="ml-13" width="12" height="12"><use href="#trash"/></svg>
                </div>
            </section>

            <section class="panel layers-panel">
                <div class="tabs"><span class="tab on w-43">Layers</span><span class="tab w-61">Artboards</span><svg class="flyout" width="14" height="9"><use href="#flyout"/></svg></div>
                <div class="list layers-list">
                    <div class="layer-row">
                        <span class="layer-cell eye"><svg width="13" height="9" viewBox="0 0 13 9"><path d="M.5 4.5C3 .5 10 .5 12.5 4.5 10 8.5 3 8.5 .5 4.5z" fill="#bcbcbc" stroke="#e0e0e0" stroke-width=".6"/><circle cx="6.5" cy="4.5" r="2" fill="#444"/></svg></span>
                        <span class="layer-cell lock"></span>
                        <span class="layer-bar"></span>
                        <span class="layer-expand"></span>
                        <svg class="layer-thumb" width="18" height="18" viewBox="0 0 18 18"><rect width="18" height="18" fill="#fff"/><g fill="none" stroke="#e08a80" stroke-width=".7"><circle cx="6" cy="6" r="3.5"/><circle cx="5" cy="10" r="3.5"/><circle cx="9" cy="10" r="4"/><circle cx="12" cy="8" r="5"/></g></svg>
                        <span class="layer-name">Layer 1</span>
                        <span class="layer-target"><i class="target-ring"></i><i class="target-box"></i></span>
                    </div>
                </div>
                <div class="panel-foot layers-foot">
                    <span class="foot-count">1 Layer</span>
                    <svg class="ml-43" width="13" height="13" viewBox="0 0 13 13"><circle cx="8" cy="5" r="4" fill="none" stroke="#bbb" stroke-width="1.2"/><path d="M5 8l-4 4" stroke="#bbb" stroke-width="1.5"/></svg>
                    <svg class="ml-13" width="12" height="12" viewBox="0 0 12 12"><rect x=".5" y=".5" width="7" height="7" fill="#aaa" stroke="#ddd"/><rect x="3.5" y="3.5" width="8" height="8" fill="none" stroke="#888"/></svg>
                    <svg class="ml-12" width="15" height="12" viewBox="0 0 15 12"><path d="M5 2h10v9H8V8H5z" fill="#cfcfcf"/><path d="M0 3h5L3 1M5 3L3 5" fill="none" stroke="#ddd"/></svg>
                    <svg class="ml-14" width="12" height="12"><use href="#newitem"/></svg>
                    <svg class="ml-13" width="12" height="12"><use href="#trash"/></svg>
                </div>
            </section>

            <section class="panel pathfinder-panel">
                <div class="tabs"><span class="tab w-62">Transform</span><span class="tab w-41">Align</span><span class="tab on w-64">Pathfinder</span><svg class="flyout" width="14" height="9"><use href="#flyout"/></svg></div>
                <div class="pf-label">Shape Modes:</div>
                <div class="pf-row">
                    <svg class="ml-11" width="14" height="14" viewBox="0 0 14 14"><rect x=".5" y=".5" width="9" height="9" fill="#888" stroke="#bbb"/><rect x="4.5" y="4.5" width="9" height="9" fill="#888" stroke="#999"/></svg>
                    <svg class="ml-21" width="14" height="14" viewBox="0 0 14 14"><rect x=".5" y=".5" width="9" height="9" fill="#999" stroke="#bbb"/><rect x="4.5" y="4.5" width="9" height="9" fill="#484848" stroke="#666"/></svg>
                    <svg class="ml-22" width="14" height="14" viewBox="0 0 14 14"><rect x=".5" y=".5" width="9" height="9" fill="none" stroke="#bbb"/><rect x="4.5" y="4.5" width="9" height="9" fill="none" stroke="#bbb"/><rect x="4.5" y="4.5" width="5" height="5" fill="#888"/></svg>
                    <svg class="ml-22" width="14" height="14" viewBox="0 0 14 14"><rect x=".5" y=".5" width="9" height="9" fill="#777" stroke="#bbb"/><rect x="4.5" y="4.5" width="9" height="9" fill="#777" stroke="#bbb"/><rect x="5" y="5" width="4" height="4" fill="#484848"/></svg>
                    <span class="expand-btn">Expand</span>
                </div>
                <div class="pf-label second">Pathfinders:</div>
                <div class="pf-row pf-icons">
                    <svg class="ml-14" width="15" height="15" viewBox="0 0 15 15"><path d="M.5.5h6v3h-3v3h-3zM4.5 4.5h5v5h-5zM10.5 6.5v8h-8v-4h8" fill="none" stroke="#bbb"/></svg>
                    <svg class="ml-22" width="15" height="15" viewBox="0 0 15 15"><path d="M0 0h5v3h4v4H0zM9 5h6v10H4V9h5z" fill="#bbb"/></svg>
                    <svg class="ml-22" width="15" height="15" viewBox="0 0 15 15"><rect width="10" height="10" fill="#ddd"/><path d="M10 5h5v10H5v-5h5z" fill="#999"/></svg>
                    <svg class="ml-22" width="15" height="15" viewBox="0 0 15 15"><path d="M0 0h10v5H5v5H0z" fill="#666"/><rect x="5" y="5" width="5" height="5" fill="#ccc"/><path d="M10 5h5v10H5v-5h5z" fill="#777"/></svg>
                    <svg class="ml-22" width="15" height="15" viewBox="0 0 15 15"><path d="M.5.5h9v4h-5v5h-4zM5.5 5.5h4v4h-4zM10.5 5.5h4v9h-9v-4h5z" fill="none" stroke="#bbb"/></svg>
                    <svg class="ml-22" width="15" height="15" viewBox="0 0 15 15"><rect x=".5" y=".5" width="9" height="9" fill="#555" stroke="#888"/><path d="M10.5 5.5h4v9h-9v-4h5z" fill="none" stroke="#ccc"/></svg>
                </div>
            </section>
        </aside>
    </div>
</body>
</html>
```

FILE: styles.css
```css
* {
    box-sizing: border-box;
}

html, body {
    margin: 0;
    padding: 0;
    height: 100%;
}

body {
    display: flex;
    flex-direction: column;
    height: 1032px;
    overflow: hidden;
    background-color: #474747;
    color: #d4d4d4;
    font-family: "Noto Sans", sans-serif;
    font-size: 11px;
}

.defs {
    position: absolute;
}

/* spacing helpers */
.ml-2 { margin-left: 2px; }
.ml-5 { margin-left: 5px; }
.ml-6 { margin-left: 6px; }
.ml-7 { margin-left: 7px; }
.ml-8 { margin-left: 8px; }
.ml-9 { margin-left: 9px; }
.ml-10 { margin-left: 10px; }
.ml-11 { margin-left: 11px; }
.ml-12 { margin-left: 12px; }
.ml-13 { margin-left: 13px; }
.ml-14 { margin-left: 14px; }
.ml-15 { margin-left: 15px; }
.ml-16 { margin-left: 16px; }
.ml-17 { margin-left: 17px; }
.ml-21 { margin-left: 21px; }
.ml-22 { margin-left: 22px; }
.ml-23 { margin-left: 23px; }
.ml-43 { margin-left: 43px; }
.ml-58 { margin-left: 58px; }
.ml-109 { margin-left: 109px; }

.w-9 { width: 9px; }
.w-11 { width: 11px; }
.w-13 { width: 13px; }
.w-30 { width: 30px; }
.w-32 { width: 32px; }
.w-36 { width: 36px; }
.w-37 { width: 37px; }
.w-41 { width: 41px; }
.w-42 { width: 42px; }
.w-43 { width: 43px; }
.w-46 { width: 46px; }
.w-50 { width: 50px; }
.w-51 { width: 51px; }
.w-52 { width: 52px; }
.w-54 { width: 54px; }
.w-55 { width: 55px; }
.w-56 { width: 56px; }
.w-57 { width: 57px; }
.w-58 { width: 58px; }
.w-61 { width: 61px; }
.w-62 { width: 62px; }
.w-64 { width: 64px; }
.w-70 { width: 70px; }
.w-74 { width: 74px; }
.w-77 { width: 77px; }
.w-81 { width: 81px; }
.w-88 { width: 88px; }
.w-90 { width: 90px; }

/* top menu */
.menubar {
    display: flex;
    align-items: center;
    flex: none;
    height: 32px;
    padding: 0 0 2px 9px;
    background-color: #474747;
}

.app-logo {
    width: 18px;
    color: #b9812c;
    font-family: "Liberation Sans", sans-serif;
    font-size: 20px;
    font-weight: bold;
    letter-spacing: -1px;
}

.menu-items {
    display: flex;
    gap: 18px;
    margin-left: 20px;
    font-size: 11px;
    color: #d8d8d8;
}

.vsep {
    flex: none;
    width: 1px;
    height: 24px;
    background-color: #303030;
    border-right: 1px solid #555;
}

.vsep.tall {
    height: 20px;
}

.bridge {
    width: 16px;
    height: 15px;
    border: 1px solid #999;
    background-color: #5f5f5f;
    color: #222;
    font-size: 9px;
    font-weight: bold;
    line-height: 13px;
    text-align: center;
}

.caret {
    flex: none;
    width: 0;
    height: 0;
    border-left: 3.5px solid transparent;
    border-right: 3.5px solid transparent;
    border-top: 5px solid #c8c8c8;
}

.caret.small {
    border-left-width: 2.5px;
    border-right-width: 2.5px;
    border-top-width: 3px;
}

.workspace-sep {
    margin-left: auto;
}

.workspace {
    margin-left: 11px;
    color: #b4b4b4;
    font-size: 11px;
}

.win-btns {
    display: flex;
    align-self: flex-start;
    height: 18px;
    margin-left: 14px;
    margin-right: 3px;
    border: 1px solid #222;
    border-top: none;
    border-radius: 0 0 4px 4px;
    background-color: #3a3a3a;
}

.win-btn {
    display: flex;
    align-items: center;
    justify-content: center;
    color: #eee;
    font-family: "Liberation Sans", sans-serif;
    font-size: 13px;
    font-weight: bold;
}

.win-btn.min {
    width: 27px;
    border-right: 1px solid #222;
}

.win-btn.min i {
    width: 10px;
    height: 3px;
    margin-top: 5px;
    background-color: #eee;
}

.win-btn.restore {
    width: 28px;
    border-right: 1px solid #222;
}

.win-btn.close {
    width: 46px;
}

/* control bar */
.controlbar {
    display: flex;
    align-items: center;
    flex: none;
    height: 33px;
    padding-left: 5px;
    background-color: #484848;
    border-top: 1px solid #2b2b2b;
    border-bottom: 1px solid #2b2b2b;
}

.grip {
    flex: none;
    width: 3px;
    height: 20px;
    background: repeating-linear-gradient(to bottom, #111 0, #111 1px, transparent 1px, transparent 3px);
}

.ctl-label {
    flex: none;
    color: #cfcfcf;
    font-size: 10.5px;
}

.orange-label {
    flex: none;
    color: #e08a2c;
    font-size: 10.5px;
    text-decoration: underline dotted;
    text-underline-offset: 2px;
}

.spin {
    display: flex;
    flex: none;
    flex-direction: column;
    width: 15px;
    height: 18px;
    border: 1px solid #2b2b2b;
    background-color: #535353;
}

.spin b {
    position: relative;
    flex: 1;
}

.spin b::after {
    content: "";
    position: absolute;
    left: 3px;
    top: 2px;
    border-left: 3.5px solid transparent;
    border-right: 3.5px solid transparent;
    border-bottom: 4px solid #d0d0d0;
}

.spin b + b {
    border-top: 1px solid #2b2b2b;
}

.spin b + b::after {
    border-bottom: none;
    border-top: 4px solid #d0d0d0;
}

.field {
    display: flex;
    align-items: center;
    flex: none;
    height: 18px;
    padding-left: 4px;
    background-color: #a1a1a1;
    color: #111;
    border-top: 1px solid #2b2b2b;
    border-bottom: 1px solid #2b2b2b;
    font-size: 10.5px;
    white-space: nowrap;
    overflow: hidden;
}

.field.dark {
    border-right: 1px solid #2b2b2b;
    font-size: 10px;
}

.drop {
    display: flex;
    align-items: center;
    justify-content: center;
    flex: none;
    width: 15px;
    height: 18px;
    background-color: #535353;
    border: 1px solid #2b2b2b;
}

.drop::after {
    content: "";
    border-left: 3.5px solid transparent;
    border-right: 3.5px solid transparent;
    border-top: 5px solid #d6d6d6;
}

.unknown {
    flex: none;
    width: 17px;
    height: 18px;
    border: 2px solid #fff;
    background-color: #3c3c3c;
    color: #eee;
    font-size: 11px;
    font-weight: bold;
    line-height: 13px;
    text-align: center;
}

.profile {
    display: flex;
    align-items: center;
    gap: 5px;
    flex: none;
    height: 18px;
    padding-left: 5px;
    background-color: #e6e6e6;
    border: 1px solid #2b2b2b;
    color: #111;
    font-size: 10px;
    white-space: nowrap;
}

.profile i {
    flex: none;
    height: 2px;
    background-color: #111;
}

.style-swatch {
    flex: none;
    width: 19px;
    height: 18px;
    background-color: #e6e6e6;
    border: 1px solid #2b2b2b;
}

.ctl-flyout {
    margin-left: auto;
    margin-right: 17px;
}

/* main area */
.workarea {
    display: flex;
    flex: 1;
    min-height: 0;
}

.tools {
    flex: none;
    width: 73px;
    background-color: #484848;
    border-right: 2px solid #2b2b2b;
}

.tools-head {
    height: 12px;
    padding-left: 5px;
    background-color: #383838;
    line-height: 11px;
}

.collapse {
    color: #a8a8a8;
    font-family: "DejaVu Sans", sans-serif;
    font-size: 6px;
    letter-spacing: -1px;
}

.tools-grip {
    width: 20px;
    height: 4px;
    margin: 3px 0 10px 26px;
    background: repeating-linear-gradient(to right, #111 0, #111 1px, transparent 1px, transparent 2px);
}

.tool-group {
    display: grid;
    grid-template-columns: 30px 30px;
    grid-auto-rows: 24px;
    width: 66px;
    margin-left: 6px;
    border-bottom: 1px solid #333;
}

.tool-group + .tool-group {
    padding-top: 1px;
}

.tool {
    position: relative;
    display: flex;
    align-items: center;
    justify-content: center;
}

.tool svg {
    width: 20px;
    height: 20px;
}

.tool.more::after {
    content: "";
    position: absolute;
    right: 2px;
    bottom: 2px;
    border-left: 3px solid transparent;
    border-bottom: 3px solid #d0d0d0;
}

.tool.active {
    background-color: #333;
    border: 1px solid #3d3d3d;
}

.type-tool {
    color: #c8c8c8;
    font-family: "Liberation Serif", serif;
    font-size: 19px;
}

.fill-stroke {
    position: relative;
    height: 62px;
}

.fill-box {
    position: absolute;
    left: 6px;
    top: 3px;
}

.fill-box svg {
    display: block;
}

.stroke-box {
    position: absolute;
    left: 24px;
    top: 22px;
    width: 36px;
    height: 35px;
    border: 1px solid #222;
}

.stroke-inner {
    position: absolute;
    left: 8px;
    top: 8px;
    width: 18px;
    height: 18px;
    border: 1px solid #222;
}

.q {
    position: absolute;
    color: #b8cde0;
    font-size: 9px;
    font-weight: bold;
    font-style: normal;
    line-height: 9px;
}

.q1 { right: 1px; top: 2px; }
.q2 { left: 2px; bottom: 1px; }
.q3 { right: 1px; bottom: 1px; }

.swap {
    position: absolute;
    left: 50px;
    top: 4px;
}

.default-colors {
    position: absolute;
    left: 6px;
    top: 45px;
}

.mode-row {
    display: flex;
    gap: 1px;
    width: 61px;
    margin-left: 7px;
    padding: 1px;
    background-color: #2f2f2f;
}

.mode-row.colors {
    height: 19px;
    margin-top: 2px;
}

.mode-row.draw {
    height: 18px;
    margin-top: 6px;
}

.mode {
    display: flex;
    align-items: center;
    justify-content: center;
    flex: 1;
    background-color: #5a5a5a;
}

.mode.on {
    background-color: #333;
}

.mode i {
    width: 13px;
    height: 13px;
}

.mode-red {
    background-color: #c1272d;
    border: 1px solid #111;
}

.mode-grad {
    background: linear-gradient(to right, #fff, #222);
    border: 1px solid #111;
}

.screen-mode {
    display: block;
    margin: 7px 0 0 24px;
}

/* document */
.doc {
    display: flex;
    flex: 1;
    flex-direction: column;
    min-width: 0;
}

.tabbar {
    flex: none;
    height: 21px;
    background-color: #353535;
}

.doc-tab {
    display: flex;
    align-items: center;
    width: 206px;
    height: 21px;
    padding-left: 11px;
    background-color: #535353;
    color: #e8e8e8;
    font-family: "Noto Sans", "Noto Sans CJK KR", sans-serif;
    font-size: 11.5px;
}

.doc-name {
    width: 181px;
    white-space: nowrap;
}

.tab-x {
    color: #ddd;
    font-size: 12px;
    font-weight: bold;
}

.midrow {
    display: flex;
    flex: 1;
    min-height: 0;
}

.canvas {
    position: relative;
    flex: 1;
    padding: 41px 0 0 47px;
    background-color: #5a5a5a;
    overflow: hidden;
}

.artboard {
    width: 1505px;
    height: 848px;
    background-color: #fff;
    outline: 1px solid #111;
    outline-offset: -1px;
}

.drawing {
    display: block;
    width: 1505px;
    height: 848px;
}

.drawing circle, .drawing path {
    fill: none;
}

.under circle {
    stroke: #f3c8c8;
    stroke-width: 1.6;
}

.paths circle, .paths .box {
    stroke: #4a7dff;
    stroke-width: 1;
    shape-rendering: crispEdges;
}

.anchors rect {
    fill: #4a7dff;
}

.handles rect {
    fill: #fff;
    stroke: #4a7dff;
}

.smart-label {
    fill: #55f055;
    font-family: "Noto Sans", sans-serif;
    font-size: 10px;
}

.context-menu {
    position: absolute;
    left: 1028px;
    top: 363px;
    width: 252px;
    height: 218px;
    padding: 3px 2px;
    background-color: #f0f0f0;
    background-image: linear-gradient(#d8d8d8, #d8d8d8);
    background-repeat: no-repeat;
    background-size: 1px 100%;
    background-position: 31px 0;
    border: 1px solid #979797;
    box-shadow: 3px 3px 2px rgba(0, 0, 0, 0.5);
    color: #141414;
    font-family: "Open Sans", sans-serif;
    font-size: 14px;
    word-spacing: 4px;
}

.cm-item {
    position: relative;
    height: 24px;
    padding-left: 34px;
    line-height: 24px;
}

.cm-item.disabled {
    color: #808080;
}

.cm-item.has-sub::after {
    content: "";
    position: absolute;
    right: 11px;
    top: 7px;
    border-top: 4px solid transparent;
    border-bottom: 4px solid transparent;
    border-left: 5px solid #333;
}

.cm-item.disabled::after {
    border-left-color: #888;
}

.cm-sep {
    height: 7px;
    margin-left: 31px;
    background: linear-gradient(#d4d4d4, #d4d4d4) no-repeat 0 2px / 100% 1px;
}

.vscroll {
    display: flex;
    flex: none;
    flex-direction: column;
    align-items: center;
    width: 18px;
    padding: 6px 0 5px;
    background-color: #353535;
    border-left: 1px solid #2b2b2b;
    border-right: 1px solid #222;
}

.hscroll {
    display: flex;
    flex: 1;
    align-items: center;
    height: 100%;
    padding: 0 24px 0 6px;
    background-color: #353535;
}

.thumb {
    flex: none;
    background-color: #9a9a9a;
}

.vscroll .thumb {
    width: 16px;
    height: 14px;
    margin: auto 0;
}

.hscroll .thumb {
    width: 15px;
    height: 15px;
    margin: 0 auto;
}

.arrow {
    flex: none;
    width: 0;
    height: 0;
}

.arrow.up {
    border-left: 4px solid transparent;
    border-right: 4px solid transparent;
    border-bottom: 6px solid #c8c8c8;
}

.arrow.down {
    border-left: 4px solid transparent;
    border-right: 4px solid transparent;
    border-top: 6px solid #c8c8c8;
}

.arrow.left {
    border-top: 4px solid transparent;
    border-bottom: 4px solid transparent;
    border-right: 6px solid #e0e0e0;
}

.arrow.right {
    border-top: 4px solid transparent;
    border-bottom: 4px solid transparent;
    border-left: 6px solid #e0e0e0;
}

.statusbar {
    display: flex;
    align-items: center;
    flex: none;
    height: 17px;
    background-color: #484848;
    border-top: 1px solid #3a3a3a;
}

.status-field {
    width: 42px;
    height: 16px;
    border: none;
    padding-left: 3px;
}

.status-drop {
    height: 16px;
    margin-left: 1px;
}

.nav-group {
    display: flex;
    align-items: center;
    justify-content: center;
    gap: 9px;
    flex: none;
}

.status-text {
    flex: none;
    width: 199px;
    height: 16px;
    margin-left: 1px;
    border-left: 1px solid #3a3a3a;
    border-right: 1px solid #3a3a3a;
    color: #d4d4d4;
    font-size: 10px;
    line-height: 16px;
    text-align: center;
}

.status-more {
    position: relative;
    flex: none;
    width: 18px;
    height: 16px;
    border-right: 1px solid #2b2b2b;
}

.status-more::after {
    content: "";
    position: absolute;
    left: 7px;
    top: 4px;
    border-top: 4px solid transparent;
    border-bottom: 4px solid transparent;
    border-left: 5px solid #e0e0e0;
}

/* right dock */
.dock {
    display: flex;
    flex: none;
    flex-direction: column;
    width: 232px;
    background-color: #2d2d2d;
    border-left: 1px solid #222;
}

.dock-head {
    flex: none;
    height: 13px;
    padding-right: 5px;
    background-color: #353535;
    line-height: 10px;
    text-align: right;
}

.panel {
    position: relative;
    flex: none;
    background-color: #484848;
    border-bottom: 1px solid #333;
}

.tabs {
    display: flex;
    height: 17px;
    background-color: #383838;
}

.tab {
    flex: none;
    padding-top: 1px;
    background-color: #3d3d3d;
    border-right: 1px solid #2d2d2d;
    color: #8f8f8f;
    font-size: 10px;
    line-height: 15px;
    text-align: center;
    white-space: nowrap;
}

.tab.on {
    background-color: #484848;
    color: #e2e2e2;
}

.updown {
    display: inline-block;
    width: 5px;
    height: 9px;
    margin-right: 2px;
    border-top: 2px solid #ccc;
    border-bottom: 2px solid #ccc;
    border-radius: 2px;
    vertical-align: -1px;
}

.flyout {
    margin: 4px 4px 0 auto;
}

.list {
    display: flex;
    margin: 6px 7px 0 5px;
    border: 1px solid #2b2b2b;
    background-color: #484848;
}

.list-scroll {
    display: flex;
    flex: none;
    flex-direction: column;
    align-items: center;
    justify-content: space-between;
    width: 12px;
    margin-left: auto;
    padding: 5px 0;
    background-color: #3c3c3c;
}

.list-scroll .arrow {
    opacity: 0.6;
}

.panel-foot {
    display: flex;
    align-items: center;
    height: 17px;
    padding-left: 9px;
}

.color-panel {
    height: 134px;
}

.color-top {
    display: flex;
    align-items: center;
    height: 19px;
    margin: 7px 18px 0 6px;
}

.hash {
    margin-left: auto;
    color: #bbb;
    font-size: 11px;
}

.hex-field {
    width: 53px;
    height: 19px;
    margin-left: 6px;
    padding-left: 4px;
    background-color: #a1a1a1;
    border: 1px solid #2b2b2b;
    color: #111;
    font-size: 10.5px;
    line-height: 17px;
}

.spectrum {
    width: 207px;
    height: 76px;
    margin: 7px 0 0 6px;
    border: 1px solid #222;
    background-image:
        linear-gradient(to bottom, #fff, rgba(255, 255, 255, 0) 50%, rgba(0, 0, 0, 0) 50%, #000),
        linear-gradient(to right, #f00, #ff0 17%, #0f0 33%, #0ff 50%, #00f 67%, #f0f 83%, #f00);
}

.swatches-panel {
    height: 173px;
    margin-top: 2px;
}

.swatch-list {
    height: 129px;
}

.swatch-grid, .style-grid {
    flex: none;
}

.foot-lib {
    flex: none;
}

.dim {
    opacity: 0.55;
}

.stroke-panel {
    height: 49px;
    margin-top: 2px;
}

.weight-row {
    display: flex;
    align-items: center;
    height: 18px;
    margin: 7px 0 0 5px;
}

.weight-label {
    width: 39px;
    color: #cfcfcf;
    font-size: 10.5px;
}

.styles-panel {
    height: 286px;
    margin-top: 3px;
}

.styles-list {
    height: 243px;
}

.layers-panel {
    height: 177px;
    margin-top: 3px;
}

.layers-list {
    flex-direction: column;
    height: 135px;
}

.layer-row {
    display: flex;
    align-items: center;
    height: 21px;
    background-color: #5b6675;
    border-bottom: 1px solid #2b2b2b;
    color: #e6e6e6;
}

.layer-cell {
    display: flex;
    align-items: center;
    justify-content: center;
    height: 100%;
    border-right: 1px solid #3a3a3a;
}

.layer-cell.eye {
    width: 21px;
}

.layer-cell.lock {
    width: 21px;
}

.layer-bar {
    width: 4px;
    height: 19px;
    margin-left: 1px;
    background-color: #3f74f0;
}

.layer-expand {
    width: 0;
    height: 0;
    margin-left: 7px;
    border-top: 4px solid transparent;
    border-bottom: 4px solid transparent;
    border-left: 5px solid #ddd;
}

.layer-thumb {
    margin-left: 10px;
}

.layer-name {
    margin-left: 5px;
    font-size: 10px;
}

.layer-target {
    position: relative;
    display: flex;
    align-items: center;
    gap: 6px;
    height: 100%;
    margin-left: auto;
    padding: 0 5px;
    border-left: 1px solid #3a3a3a;
}

.layer-target::after {
    content: "";
    position: absolute;
    right: 0;
    top: 0;
    border-top: 6px solid #ddd;
    border-left: 6px solid transparent;
}

.target-ring {
    width: 9px;
    height: 9px;
    border: 1px solid #ccc;
    border-radius: 50%;
}

.target-box {
    width: 8px;
    height: 8px;
    background-color: #3f74f0;
    border: 1px solid #111;
}

.layers-foot {
    height: 19px;
    padding-left: 5px;
}

.foot-count {
    width: 39px;
    color: #d4d4d4;
    font-size: 10px;
}

.pathfinder-panel {
    flex: 1;
    margin-top: 3px;
    border-bottom: none;
}

.pf-label {
    margin: 5px 0 0 5px;
    color: #cfcfcf;
    font-size: 10.5px;
    line-height: 14px;
}

.pf-label.second {
    margin-top: 9px;
}

.pf-row {
    display: flex;
    align-items: center;
    height: 18px;
    margin-top: 8px;
}

.pf-icons {
    margin-top: 9px;
}

.expand-btn {
    width: 75px;
    height: 18px;
    margin-left: 17px;
    background-color: #4f4f4f;
    border: 1px solid #2f2f2f;
    color: #7d7d7d;
    font-size: 10.5px;
    line-height: 16px;
    text-align: center;
}
```
